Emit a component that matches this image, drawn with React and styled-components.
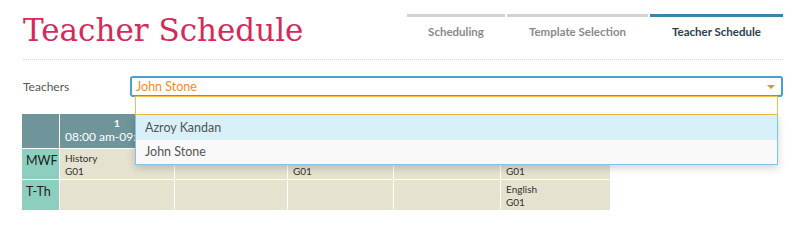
import React from "react";
import styled, { createGlobalStyle } from "styled-components";

const GlobalStyle = createGlobalStyle`
  body {
    margin: 0;
    background: #fff;
    font-family: "Lato", "Liberation Sans", sans-serif;
    color: #555;
  }
`;

const tabs = [
  { label: "Scheduling", width: 98 },
  { label: "Template Selection", width: 141 },
  { label: "Teacher Schedule", width: 133, active: true },
];

const teachers = ["Azroy Kandan", "John Stone"];

const periods = [
  "08:00 am-09:00 am",
  "09:00 am-10:00 am",
  "10:00 am-11:00 am",
  "11:00 am-12:00 pm",
  "12:00 pm-01:00 pm",
];

const rows = [
  { day: "MWF", cells: [["History", "G01"], null, ["History", "G01"], null, ["History", "G01"]] },
  { day: "T-Th", cells: [null, null, null, null, ["English", "G01"]] },
];

function App() {
  return (
    <Page>
      <GlobalStyle />
      <Header>
        <Title>Teacher Schedule</Title>
        <Tabs>
          {tabs.map((tab) => (
            <Tab key={tab.label} $active={tab.active} $width={tab.width}>
              {tab.label}
            </Tab>
          ))}
        </Tabs>
      </Header>

      <FormRow>
        <Label>Teachers</Label>
        <SelectWrap>
          <Select>
            <SelectValue>John Stone</SelectValue>
            <Caret />
          </Select>
          <Dropdown>
            <Search />
            <Options>
              {teachers.map((name, index) => (
                <Option key={name} $highlighted={index === 0}>
                  {name}
                </Option>
              ))}
            </Options>
          </Dropdown>
        </SelectWrap>
      </FormRow>

      <Grid>
        <HeadCell />
        {periods.map((p, i) => (
          <HeadCell key={p}>
            <PeriodNum>{i + 1}</PeriodNum>
            <PeriodTime>{p}</PeriodTime>
          </HeadCell>
        ))}
        {rows.map((row) => (
          <React.Fragment key={row.day}>
            <DayCell>{row.day}</DayCell>
            {row.cells.map((cell, i) => (
              <Cell key={i}>
                {cell && (
                  <>
                    <div>{cell[0]}</div>
                    <div>{cell[1]}</div>
                  </>
                )}
              </Cell>
            ))}
          </React.Fragment>
        ))}
      </Grid>
    </Page>
  );
}

export default App;

const Page = styled.div`
  width: 760px;
  padding: 0 26px 0 23px;
`;

const Header = styled.div`
  display: flex;
  justify-content: space-between;
  align-items: flex-start;
  height: 59px;
  border-bottom: 1px dotted #d6d6d6;
`;

const Title = styled.h1`
  margin: 12px 0 0;
  font-family: "DejaVu Serif", "Liberation Serif", serif;
  font-weight: normal;
  font-size: 31px;
  line-height: 37px;
  color: #d52a5c;
  letter-spacing: 0;
`;

const Tabs = styled.div`
  display: flex;
  gap: 2px;
  margin-top: 14px;
`;

const Tab = styled.div`
  width: ${(p) => p.$width}px;
  border-top: 3px solid ${(p) => (p.$active ? "#3a86a6" : "#d3d3d3")};
  padding-top: 8px;
  text-align: center;
  font-size: 11.5px;
  font-weight: bold;
  color: ${(p) => (p.$active ? "#2d3e4e" : "#8a8a8a")};
`;

const FormRow = styled.div`
  display: flex;
  align-items: flex-start;
  margin-top: 16px;
`;

const Label = styled.div`
  width: 107px;
  padding-top: 3px;
  font-size: 12px;
  color: #555;
`;

const SelectWrap = styled.div`
  position: relative;
  flex: 1;
`;

const Select = styled.div`
  display: flex;
  align-items: center;
  justify-content: space-between;
  height: 17px;
  padding: 0 6px 0 4px;
  border: 2px solid #4a9fd2;
  border-radius: 3px;
`;

const SelectValue = styled.span`
  font-size: 12.5px;
  color: #f38b2b;
`;

const Caret = styled.span`
  width: 0;
  height: 0;
  border-left: 4px solid transparent;
  border-right: 4px solid transparent;
  border-top: 4px solid #f38b2b;
`;

const Dropdown = styled.div`
  position: absolute;
  top: 20px;
  left: 5px;
  right: 5px;
  z-index: 2;
`;

const Search = styled.div`
  height: 17px;
  background: #fff;
  border: 1px solid #f5bd4a;
`;

const Options = styled.div`
  background: #f9f9f9;
  border: 1px solid #7ec6e2;
  border-top: none;
  box-shadow: 0 3px 8px rgba(0, 0, 0, 0.18);
`;

const Option = styled.div`
  height: 24px;
  line-height: 24px;
  padding-left: 9px;
  font-size: 12.5px;
  color: #555;
  background: ${(p) => (p.$highlighted ? "#d8f0f8" : "#f9f9f9")};

  &:first-child {
    height: 25px;
    line-height: 25px;
  }
`;

const Grid = styled.div`
  display: grid;
  grid-template-columns: 37px 114px 112px 105px 106px 109px;
  grid-template-rows: 34px 30px 30px;
  gap: 1px;
  width: 588px;
  margin-top: 17px;
  margin-left: -1px;
`;

const HeadCell = styled.div`
  background: #6f959b;
  color: #fff;
  text-align: center;
  padding-top: 3px;
  overflow: hidden;
  white-space: nowrap;
`;

const PeriodNum = styled.div`
  font-size: 10px;
  font-weight: bold;
  line-height: 12px;
`;

const PeriodTime = styled.div`
  font-size: 12px;
  line-height: 16px;
`;

const DayCell = styled.div`
  background: #8dcfbf;
  color: #222;
  font-size: 12.5px;
  padding: 4px 0 0 4px;
`;

const Cell = styled.div`
  background: #e5e2cf;
  color: #333;
  font-size: 10px;
  line-height: 13px;
  padding: 3px 5px;
`;
